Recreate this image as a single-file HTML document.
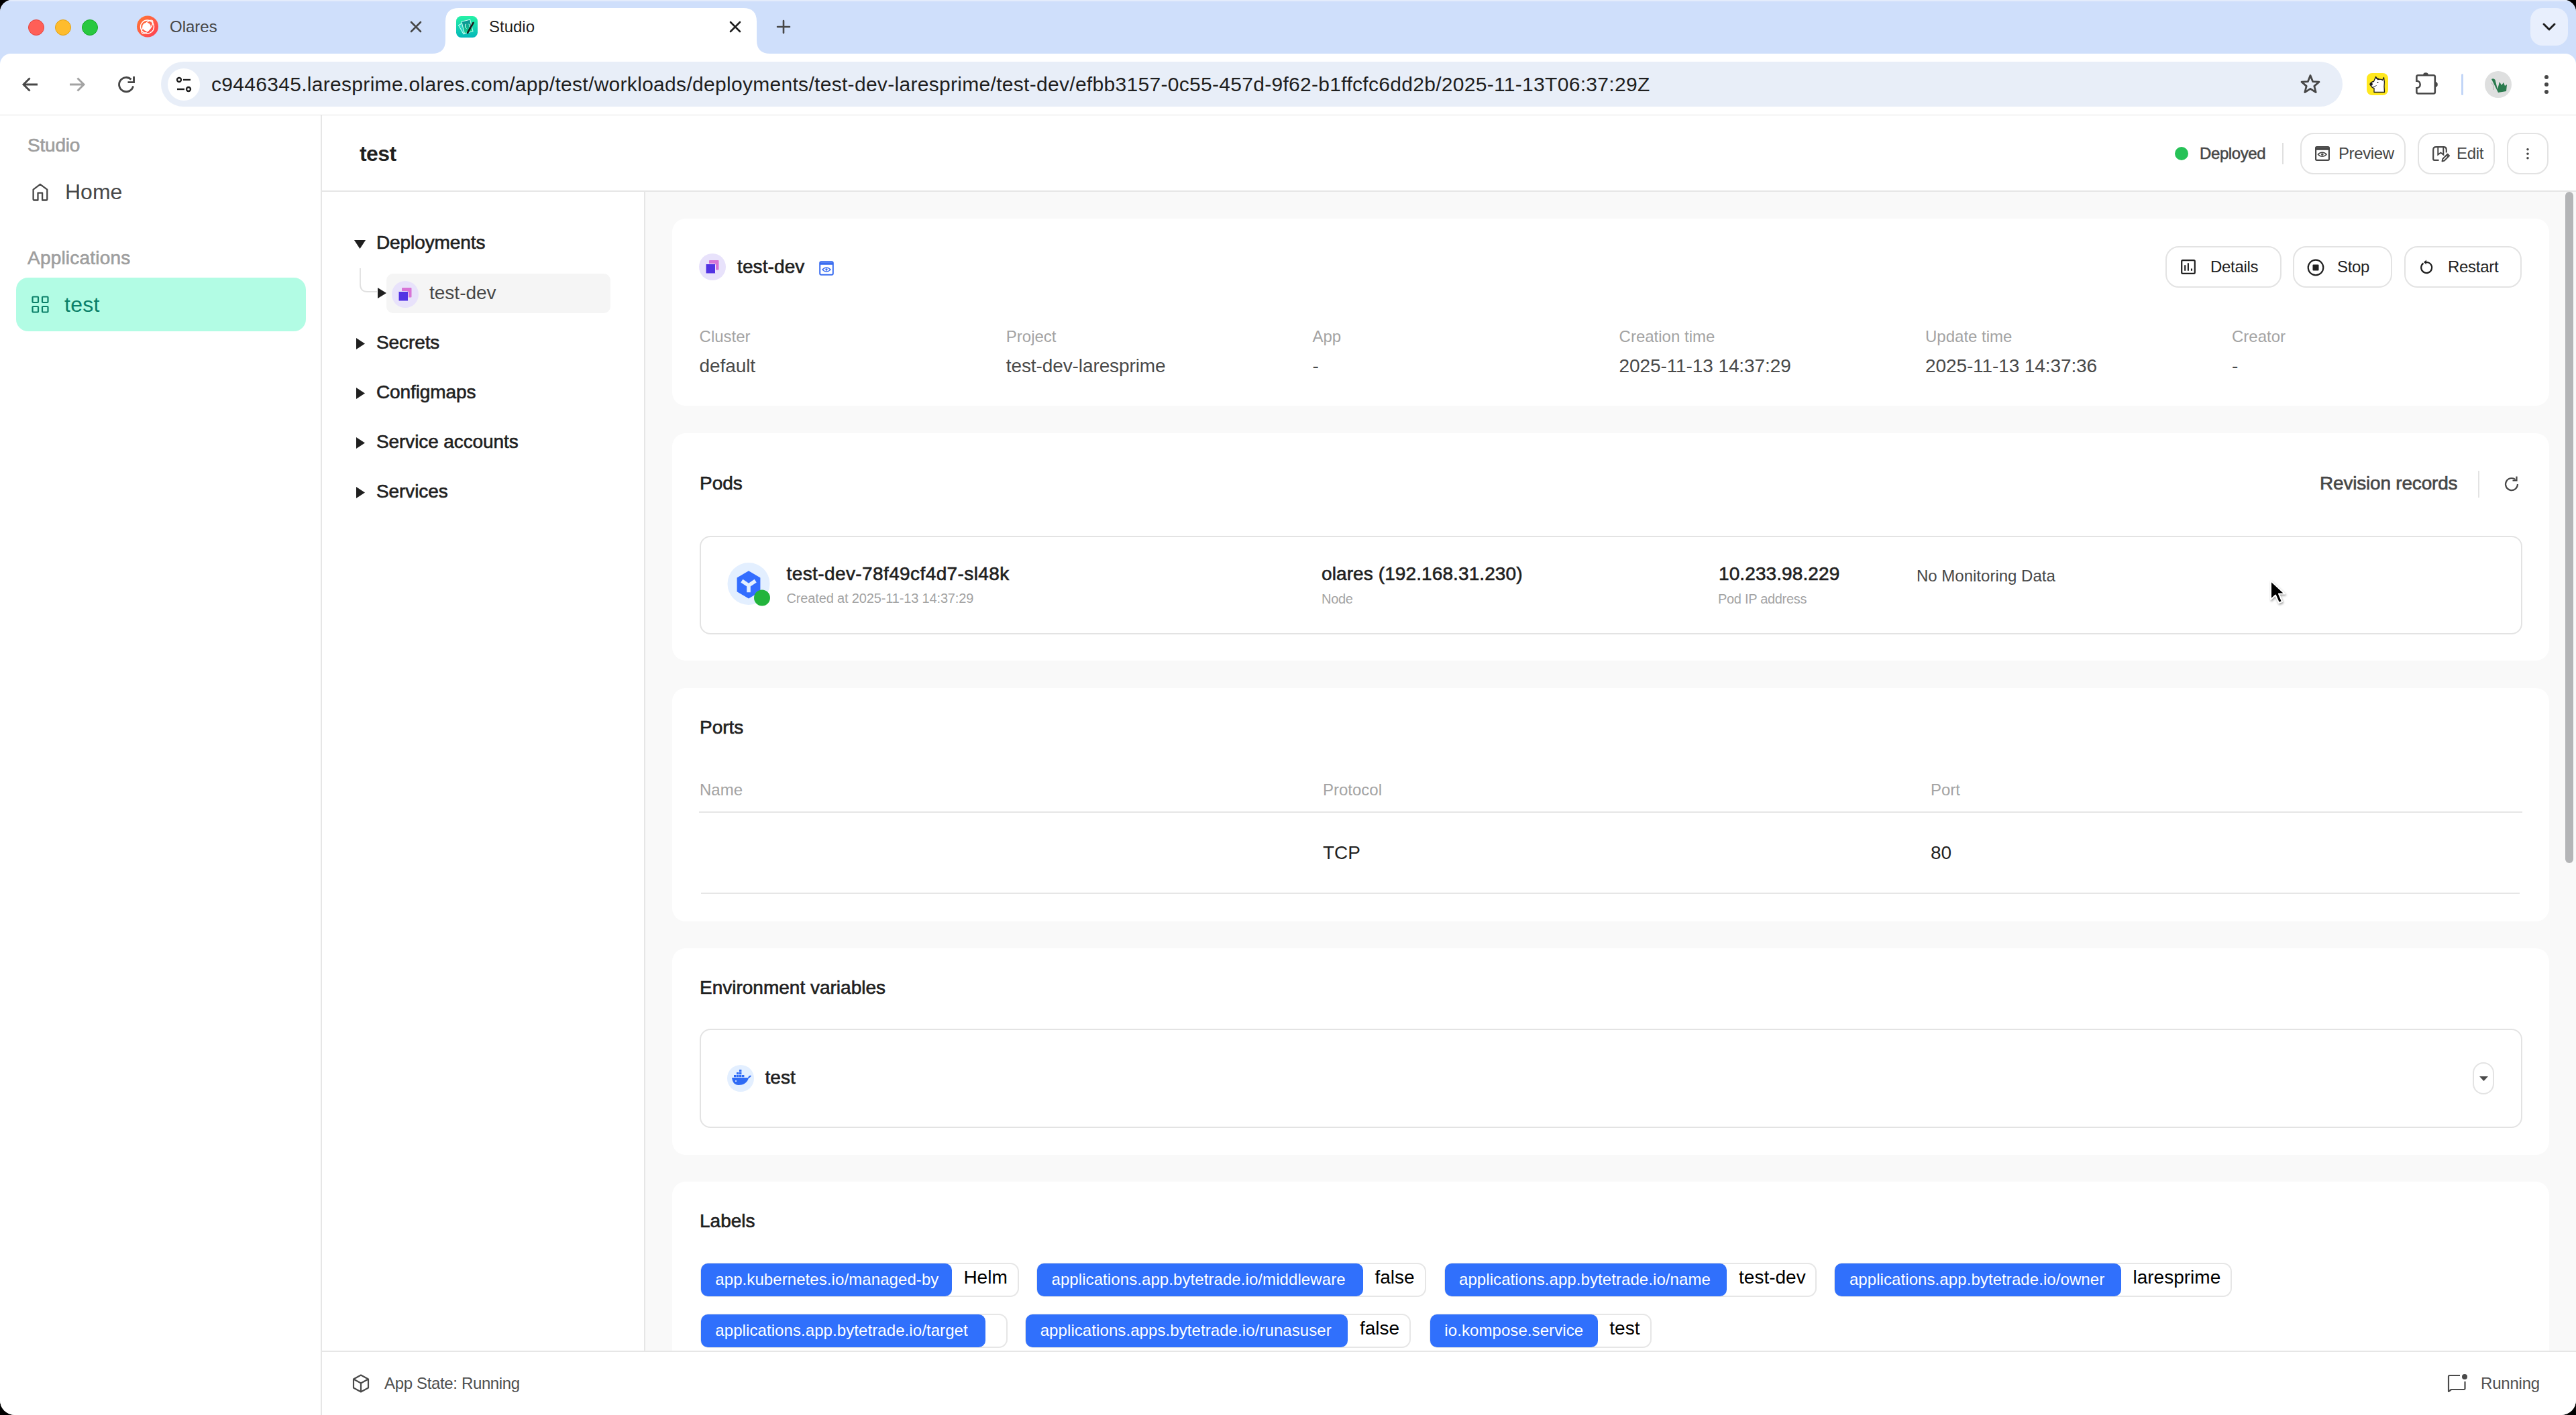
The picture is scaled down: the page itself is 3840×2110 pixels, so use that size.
<!DOCTYPE html><html><head><meta charset="utf-8"><style>
html,body{margin:0;padding:0;width:3840px;height:2110px;overflow:hidden;background:#000;}
#win{position:absolute;left:0;top:0;width:3840px;height:2110px;border-radius:18px 18px 22px 22px;overflow:hidden;background:#fff;font-family:"Liberation Sans",sans-serif;}
.a{position:absolute;box-sizing:border-box;}
.t{position:absolute;white-space:nowrap;line-height:1;}
svg.a{overflow:visible}
</style></head><body><div id="win">
<div class="a" style="left:0px;top:0px;width:3840px;height:100px;background:#cfdffb"></div>
<div class="a" style="left:0px;top:0px;width:3840px;height:2px;background:#e4ecfb"></div>
<div class="a" style="left:42px;top:29px;width:24px;height:24px;border-radius:50%;background:#ff5f57;border:1px solid #e24640"></div>
<div class="a" style="left:82px;top:29px;width:24px;height:24px;border-radius:50%;background:#febc2e;border:1px solid #e1a116"></div>
<div class="a" style="left:122px;top:29px;width:24px;height:24px;border-radius:50%;background:#28c840;border:1px solid #1aab29"></div>
<svg class="a" style="left:204px;top:24px" width="32" height="32" viewBox="0 0 32 32"><defs><linearGradient id="og" x1="0" y1="0" x2="1" y2="1"><stop offset="0" stop-color="#ff7a32"/><stop offset="1" stop-color="#ff3d55"/></linearGradient></defs><circle cx="16" cy="15.5" r="16" fill="url(#og)"/><circle cx="14.5" cy="16" r="6.2" fill="#fff"/><circle cx="15.5" cy="16" r="10" fill="none" stroke="#fff" stroke-width="1.4"/><ellipse cx="15.5" cy="16" rx="12" ry="5" fill="none" stroke="#fff" stroke-width="1.3" transform="rotate(-52 15.5 16)"/></svg>
<div class="t" style="left:253px;top:27.68px;font-size:24px;color:#474747;font-weight:400;">Olares</div>
<svg class="a" style="left:611px;top:31px" width="18" height="18" viewBox="0 0 18 18"><path d="M2 2L16 16M16 2L2 16" stroke="#474747" stroke-width="2.6" stroke-linecap="round"/></svg>
<svg class="a" style="left:644px;top:12px" width="504" height="68" viewBox="0 0 504 68"><path d="M0 68 Q20 68 20 48 L20 20 Q20 0 40 0 L464 0 Q484 0 484 20 L484 48 Q484 68 504 68 Z" fill="#fff"/></svg>
<svg class="a" style="left:680px;top:24px" width="32" height="32" viewBox="0 0 32 32"><defs><linearGradient id="sg" x1="0" y1="0" x2="0" y2="1"><stop offset="0" stop-color="#26f2a6"/><stop offset="1" stop-color="#03b7b9"/></linearGradient><linearGradient id="sc" x1="0" y1="0" x2="0" y2="1"><stop offset="0" stop-color="#0b8f96"/><stop offset="1" stop-color="#13d08e"/></linearGradient></defs><rect width="32" height="32" rx="7.5" fill="url(#sg)"/><rect x="6.5" y="10" width="11" height="15" fill="#2fd3c6" stroke="#c9fff2" stroke-width="1" transform="rotate(-30 12 17.5)"/><rect x="10" y="6.5" width="13" height="18" fill="url(#sc)" stroke="#c9fff2" stroke-width="1" transform="rotate(-14 16.5 15.5)"/><path d="M15 12Q13 12 13.5 15Q13 17 15.5 18.5M18.5 12Q21 12.5 20 16" fill="none" stroke="#e8fff8" stroke-width="1"/><path d="M25.5 10L17 25" stroke="#1a1a1a" stroke-width="2.6" stroke-linecap="round"/></svg>
<div class="t" style="left:729px;top:27.68px;font-size:24px;color:#1f1f1f;font-weight:400;">Studio</div>
<svg class="a" style="left:1087px;top:31px" width="18" height="18" viewBox="0 0 18 18"><path d="M2 2L16 16M16 2L2 16" stroke="#1f1f1f" stroke-width="2.6" stroke-linecap="round"/></svg>
<svg class="a" style="left:1158px;top:30px" width="20" height="20" viewBox="0 0 20 20"><path d="M10 1V19M1 10H19" stroke="#474747" stroke-width="2.6" stroke-linecap="round"/></svg>
<div class="a" style="left:3772px;top:12px;width:56px;height:56px;border-radius:18px;background:#e8effd"></div>
<svg class="a" style="left:3790px;top:34px" width="20" height="12" viewBox="0 0 20 12"><path d="M2 2L10 10L18 2" fill="none" stroke="#1f1f1f" stroke-width="3" stroke-linecap="round" stroke-linejoin="round"/></svg>
<div class="a" style="left:0px;top:80px;width:3840px;height:93px;background:#fff;border-bottom:2px solid #e1e3e1;border-radius:16px 16px 0 0"></div>
<svg class="a" style="left:32px;top:114px" width="25" height="24" viewBox="0 0 25 24"><path d="M24 12H3M12.5 2.5L3 12L12.5 21.5" fill="none" stroke="#474747" stroke-width="2.9"/></svg>
<svg class="a" style="left:103px;top:114px" width="25" height="24" viewBox="0 0 25 24"><path d="M1 12H22M12.5 2.5L22 12L12.5 21.5" fill="none" stroke="#a3a3a3" stroke-width="2.9"/></svg>
<svg class="a" style="left:176px;top:114px" width="25" height="24" viewBox="0 0 25 24"><path d="M22.5 14.5A10.6 10.6 0 1 1 19.5 4.5" fill="none" stroke="#474747" stroke-width="2.9"/><path d="M14.5 8.6H23.5V0" fill="none" stroke="#474747" stroke-width="2.9"/></svg>
<div class="a" style="left:240px;top:92px;width:3252px;height:67px;border-radius:34px;background:#e8eef8"></div>
<div class="a" style="left:250px;top:102px;width:48px;height:48px;border-radius:50%;background:#fff"></div>
<svg class="a" style="left:262px;top:114px" width="24" height="24" viewBox="0 0 24 24"><circle cx="5" cy="5" r="3" fill="none" stroke="#1f1f1f" stroke-width="2.4"/><path d="M11 5H22" stroke="#1f1f1f" stroke-width="2.4"/><circle cx="19" cy="19" r="3" fill="none" stroke="#1f1f1f" stroke-width="2.4"/><path d="M2 19H13" stroke="#1f1f1f" stroke-width="2.4"/></svg>
<div class="t" style="left:315px;top:110.61px;font-size:30px;color:#1f1f1f;font-weight:400;letter-spacing:0.3px;">c9446345.laresprime.olares.com/app/test/workloads/deployments/test-dev-laresprime/test-dev/efbb3157-0c55-457d-9f62-b1ffcfc6dd2b/2025-11-13T06:37:29Z</div>
<svg class="a" style="left:3428px;top:110px" width="32" height="30" viewBox="0 0 32 30"><path d="M16 2.5L19.6 11.6L29 12.2L21.8 18.4L24.2 27.6L16 22.4L7.8 27.6L10.2 18.4L3 12.2L12.4 11.6Z" fill="none" stroke="#474747" stroke-width="2.8" stroke-linejoin="round"/></svg>
<svg class="a" style="left:3528px;top:109px" width="32" height="33" viewBox="0 0 32 33"><rect width="32" height="33" rx="8" fill="#ffe81f"/><path d="M5.5 17Q6 13 10.5 12.5L13.5 5.5L16.5 9.5Q21 8.5 23.5 10.5L25.5 6.5Q27 14 26 20L26.5 28.5H11V22.5Q7 21.5 5.5 17Z" fill="#fff" stroke="#1a1a1a" stroke-width="1.3" stroke-linejoin="round"/><circle cx="6.6" cy="16.6" r="2.3" fill="#1a1a1a"/><circle cx="16.5" cy="14" r="1" fill="#1a1a1a"/><path d="M10 19.5Q12.5 20.5 14.5 18.5" fill="none" stroke="#1a1a1a" stroke-width="1"/><path d="M13.5 8Q17 7 19 10" fill="none" stroke="#1a1a1a" stroke-width="1.4"/></svg>
<svg class="a" style="left:3600px;top:106px" width="36" height="36" viewBox="0 0 36 36"><path d="M4.6 6.2H27.6Q29.8 6.2 29.8 8.4V31.3Q29.8 33.5 27.6 33.5H4.6Q2.4 33.5 2.4 31.3V25.2A5.3 5.3 0 0 0 2.4 14.6V8.4Q2.4 6.2 4.6 6.2Z" fill="none" stroke="#474747" stroke-width="2.6"/><path d="M12 6.2A4 4 0 0 1 20 6.2Z" fill="#474747"/><path d="M29.8 15.9A4 4 0 0 1 29.8 23.9Z" fill="#474747"/></svg>
<div class="a" style="left:3669px;top:110px;width:3px;height:32px;background:#c2d5f7;border-radius:2px"></div>
<svg class="a" style="left:3704px;top:106px" width="40" height="40" viewBox="0 0 40 40"><circle cx="20" cy="20" r="20" fill="#dedfdf"/><path d="M10 12Q13 10 15.5 13L19 27L22 16L25 21L28 17L30 22L33 20L32 30L20 32Z" fill="#2a7a4e"/><path d="M10 17Q11 20 13 21V28" fill="none" stroke="#b0b0b0" stroke-width="1"/></svg>
<svg class="a" style="left:3790px;top:110px" width="12" height="32" viewBox="0 0 12 32"><circle cx="6" cy="5" r="3" fill="#474747"/><circle cx="6" cy="16" r="3" fill="#474747"/><circle cx="6" cy="27" r="3" fill="#474747"/></svg>
<div class="a" style="left:0px;top:172px;width:480px;height:1938px;background:#fff;border-right:2px solid #e6e6e6"></div>
<div class="t" style="left:41px;top:203.30px;font-size:28px;color:#9e9e9e;font-weight:400;letter-spacing:-0.2px;-webkit-text-stroke:0.62px #9e9e9e;">Studio</div>
<svg class="a" style="left:48px;top:273px" width="24" height="27" viewBox="0 0 24 27"><path d="M1.6 9.6L11.9 1.8L22.3 9.6V24.3Q22.3 25.5 21.1 25.5H15.1V14.6H8.5V25.5H2.8Q1.6 25.5 1.6 24.3Z" fill="none" stroke="#474747" stroke-width="2.3" stroke-linejoin="round"/></svg>
<div class="t" style="left:97px;top:269.91px;font-size:32px;color:#474747;font-weight:400;">Home</div>
<div class="t" style="left:41px;top:371.30px;font-size:28px;color:#9e9e9e;font-weight:400;letter-spacing:0.2px;-webkit-text-stroke:0.62px #9e9e9e;">Applications</div>
<div class="a" style="left:24px;top:414px;width:432px;height:80px;border-radius:18px;background:#b2fce4"></div>
<svg class="a" style="left:47px;top:441px" width="26" height="26" viewBox="0 0 26 26"><g fill="none" stroke="#0b8069" stroke-width="2.2"><rect x="1.5" y="1.5" width="8.5" height="8.5" rx="1"/><rect x="16" y="1.5" width="8.5" height="8.5" rx="1"/><rect x="1.5" y="16" width="8.5" height="8.5" rx="1"/><rect x="16" y="16" width="8.5" height="8.5" rx="1"/></g></svg>
<div class="t" style="left:96px;top:437.91px;font-size:32px;color:#0b8069;font-weight:400;letter-spacing:0.3px;">test</div>
<div class="a" style="left:480px;top:172px;width:3360px;height:114px;background:#fff;border-bottom:2px solid #e6e6e6"></div>
<div class="t" style="left:536px;top:212.91px;font-size:32px;color:#1f1f1f;font-weight:700;letter-spacing:-0.6px;">test</div>
<div class="a" style="left:480px;top:286px;width:482px;height:1728px;background:#fff;border-right:2px solid #e6e6e6"></div>
<div class="a" style="left:962px;top:286px;width:2878px;height:1728px;background:#f9f9f9"></div>
<div class="a" style="left:3242px;top:219px;width:20px;height:20px;border-radius:50%;background:#26c257"></div>
<div class="t" style="left:3279px;top:216.68px;font-size:24px;color:#474747;font-weight:400;letter-spacing:-0.4px;-webkit-text-stroke:0.53px #474747;">Deployed</div>
<div class="a" style="left:3402px;top:213px;width:2px;height:32px;background:#e0e0e0"></div>
<div class="a" style="left:3429px;top:198px;width:157px;height:62px;border:2px solid #e3e3e3;border-radius:20px;background:#fff"></div>
<svg class="a" style="left:3451px;top:218px" width="22" height="22" viewBox="0 0 22 22"><rect x="1.1" y="1.1" width="19.8" height="19.8" rx="1.6" fill="none" stroke="#474747" stroke-width="2.2"/><path d="M1.1 4H20.9" stroke="#474747" stroke-width="3.6"/><path d="M4.5 12.3C8 8.3 13.5 8.3 17 12.3C13.5 16.3 8 16.3 4.5 12.3Z" fill="none" stroke="#474747" stroke-width="1.6"/><circle cx="10.8" cy="12.3" r="1.7" fill="#474747"/></svg>
<div class="t" style="left:3486px;top:216.68px;font-size:24px;color:#474747;font-weight:400;letter-spacing:-0.4px;">Preview</div>
<div class="a" style="left:3604px;top:198px;width:115px;height:62px;border:2px solid #e3e3e3;border-radius:20px;background:#fff"></div>
<svg class="a" style="left:3626px;top:218px" width="26" height="24" viewBox="0 0 26 24"><path d="M9.5 20.9H3A1.8 1.8 0 0 1 1.2 19.1V5.5Q1.2 1.2 5.5 1.2H16.5Q20.8 1.2 20.8 5.5V9.5" fill="none" stroke="#474747" stroke-width="2.2"/><path d="M8.3 2V12.6L12.3 9.8L16.3 12.6V2" fill="none" stroke="#474747" stroke-width="2"/><path d="M14.5 22.5L15.3 19L22.5 11.8L25 14.3L17.8 21.5Z" fill="none" stroke="#474747" stroke-width="2" stroke-linejoin="round"/><path d="M21 13.3L23.5 15.8" stroke="#474747" stroke-width="2"/></svg>
<div class="t" style="left:3662px;top:216.68px;font-size:24px;color:#474747;font-weight:400;letter-spacing:-0.3px;">Edit</div>
<div class="a" style="left:3737px;top:198px;width:62px;height:62px;border:2px solid #e3e3e3;border-radius:20px;background:#fff"></div>
<svg class="a" style="left:3764px;top:219px" width="8" height="20" viewBox="0 0 8 20"><circle cx="4" cy="3.7" r="1.8" fill="#474747"/><circle cx="4" cy="10.3" r="1.8" fill="#474747"/><circle cx="4" cy="16.7" r="1.8" fill="#474747"/></svg>
<svg class="a" style="left:527.5px;top:358.0px" width="17" height="13" viewBox="0 0 17 13"><path d="M0 0H17L8.5 13Z" fill="#1f1f1f"/></svg>
<div class="t" style="left:561px;top:348.30px;font-size:28px;color:#1f1f1f;font-weight:400;letter-spacing:-0.1px;-webkit-text-stroke:0.62px #1f1f1f;">Deployments</div>
<svg class="a" style="left:535px;top:398px" width="30" height="40" viewBox="0 0 30 40"><path d="M2 2V26Q2 37 13 37H27" fill="none" stroke="#e0e0e0" stroke-width="1.8"/></svg>
<div class="a" style="left:576px;top:408px;width:334px;height:59px;border-radius:10px;background:#f5f5f5"></div>
<svg class="a" style="left:562.5px;top:428.5px" width="13" height="16" viewBox="0 0 13 16"><path d="M0 0L13 8.0L0 16Z" fill="#1f1f1f"/></svg>
<svg class="a" style="left:584px;top:419px" width="40" height="40" viewBox="0 0 40 40"><circle cx="20" cy="20" r="20" fill="#e8e2fb"/><rect x="15" y="10" width="14.5" height="14.5" rx="1" fill="#d874d6"/><rect x="10" y="15.5" width="14.5" height="14.5" rx="1" fill="#5233e3" stroke="#f0e8fb" stroke-width="1"/></svg>
<div class="t" style="left:640px;top:423.30px;font-size:28px;color:#474747;font-weight:400;">test-dev</div>
<svg class="a" style="left:531.0px;top:503.5px" width="13" height="17" viewBox="0 0 13 17"><path d="M0 0L13 8.5L0 17Z" fill="#1f1f1f"/></svg>
<div class="t" style="left:561px;top:496.80px;font-size:28px;color:#1f1f1f;font-weight:400;letter-spacing:-0.1px;-webkit-text-stroke:0.62px #1f1f1f;">Secrets</div>
<svg class="a" style="left:531.0px;top:577.6px" width="13" height="17" viewBox="0 0 13 17"><path d="M0 0L13 8.5L0 17Z" fill="#1f1f1f"/></svg>
<div class="t" style="left:561px;top:570.90px;font-size:28px;color:#1f1f1f;font-weight:400;letter-spacing:-0.1px;-webkit-text-stroke:0.62px #1f1f1f;">Configmaps</div>
<svg class="a" style="left:531.0px;top:651.7px" width="13" height="17" viewBox="0 0 13 17"><path d="M0 0L13 8.5L0 17Z" fill="#1f1f1f"/></svg>
<div class="t" style="left:561px;top:645.00px;font-size:28px;color:#1f1f1f;font-weight:400;letter-spacing:-0.1px;-webkit-text-stroke:0.62px #1f1f1f;">Service accounts</div>
<svg class="a" style="left:531.0px;top:725.8px" width="13" height="17" viewBox="0 0 13 17"><path d="M0 0L13 8.5L0 17Z" fill="#1f1f1f"/></svg>
<div class="t" style="left:561px;top:719.10px;font-size:28px;color:#1f1f1f;font-weight:400;letter-spacing:-0.1px;-webkit-text-stroke:0.62px #1f1f1f;">Services</div>
<div class="a" style="left:3824px;top:286px;width:12px;height:1001px;border-radius:6px;background:#b4b5b7"></div>
<div class="a" style="left:1002px;top:326px;width:2798px;height:279px;border-radius:20px;background:#fff"></div>
<svg class="a" style="left:1042px;top:378px" width="40" height="40" viewBox="0 0 40 40"><circle cx="20" cy="20" r="20" fill="#e8e2fb"/><rect x="15" y="10" width="14.5" height="14.5" rx="1" fill="#d874d6"/><rect x="10" y="15.5" width="14.5" height="14.5" rx="1" fill="#5233e3" stroke="#f0e8fb" stroke-width="1"/></svg>
<div class="t" style="left:1099px;top:384.30px;font-size:28px;color:#1f1f1f;font-weight:400;letter-spacing:0.1px;-webkit-text-stroke:0.62px #1f1f1f;">test-dev</div>
<svg class="a" style="left:1221px;top:389px" width="22" height="22" viewBox="0 0 22 22"><rect x="1.2" y="1.2" width="19.6" height="19.6" rx="2" fill="none" stroke="#3a6df0" stroke-width="2"/><path d="M1.2 4H20.8" stroke="#3a6df0" stroke-width="3.6"/><path d="M5 13C8.5 9 13.5 9 17 13C13.5 17 8.5 17 5 13Z" fill="none" stroke="#3a6df0" stroke-width="1.6"/><circle cx="11" cy="13" r="1.7" fill="#3a6df0"/></svg>
<div class="a" style="left:3228px;top:367px;width:173px;height:62px;border:2px solid #e3e3e3;border-radius:20px;background:#fff"></div>
<svg class="a" style="left:3251px;top:387px" width="22" height="22" viewBox="0 0 22 22"><rect x="1.2" y="1.2" width="19.6" height="19.6" rx="1.5" fill="none" stroke="#1f1f1f" stroke-width="2.2"/><path d="M6.2 8.2V16.8M10.9 5.2V16.8M16 13.6V16.8" stroke="#1f1f1f" stroke-width="2.1"/></svg>
<div class="t" style="left:3295px;top:385.68px;font-size:24px;color:#1f1f1f;font-weight:400;letter-spacing:-0.3px;">Details</div>
<div class="a" style="left:3418px;top:367px;width:148px;height:62px;border:2px solid #e3e3e3;border-radius:20px;background:#fff"></div>
<svg class="a" style="left:3439px;top:386px" width="26" height="26" viewBox="0 0 26 26"><circle cx="13" cy="13" r="11.3" fill="none" stroke="#1f1f1f" stroke-width="2.2"/><rect x="8.5" y="8.5" width="9" height="9" rx="1" fill="#1f1f1f"/></svg>
<div class="t" style="left:3484px;top:385.68px;font-size:24px;color:#1f1f1f;font-weight:400;letter-spacing:-0.3px;">Stop</div>
<div class="a" style="left:3584px;top:367px;width:175px;height:62px;border:2px solid #e3e3e3;border-radius:20px;background:#fff"></div>
<svg class="a" style="left:3606px;top:387px" width="20" height="22" viewBox="0 0 20 22"><path d="M6.5 5.5A8 8 0 1 0 11 4" fill="none" stroke="#1f1f1f" stroke-width="2.2"/><path d="M11 0.5V7.5L7 4Z" fill="#1f1f1f"/></svg>
<div class="t" style="left:3649px;top:385.68px;font-size:24px;color:#1f1f1f;font-weight:400;letter-spacing:-0.3px;">Restart</div>
<div class="t" style="left:1042.6px;top:489.68px;font-size:24px;color:#a3a3a3;font-weight:400;">Cluster</div>
<div class="t" style="left:1042.6px;top:532.30px;font-size:28px;color:#4a4a4a;font-weight:400;letter-spacing:-0.1px;">default</div>
<div class="t" style="left:1499.8px;top:489.68px;font-size:24px;color:#a3a3a3;font-weight:400;">Project</div>
<div class="t" style="left:1499.8px;top:532.30px;font-size:28px;color:#4a4a4a;font-weight:400;letter-spacing:-0.1px;">test-dev-laresprime</div>
<div class="t" style="left:1956.5px;top:489.68px;font-size:24px;color:#a3a3a3;font-weight:400;">App</div>
<div class="t" style="left:1956.5px;top:532.30px;font-size:28px;color:#4a4a4a;font-weight:400;letter-spacing:-0.1px;">-</div>
<div class="t" style="left:2413.6px;top:489.68px;font-size:24px;color:#a3a3a3;font-weight:400;">Creation time</div>
<div class="t" style="left:2413.6px;top:532.30px;font-size:28px;color:#4a4a4a;font-weight:400;letter-spacing:-0.1px;">2025-11-13 14:37:29</div>
<div class="t" style="left:2870px;top:489.68px;font-size:24px;color:#a3a3a3;font-weight:400;">Update time</div>
<div class="t" style="left:2870px;top:532.30px;font-size:28px;color:#4a4a4a;font-weight:400;letter-spacing:-0.1px;">2025-11-13 14:37:36</div>
<div class="t" style="left:3327px;top:489.68px;font-size:24px;color:#a3a3a3;font-weight:400;">Creator</div>
<div class="t" style="left:3327px;top:532.30px;font-size:28px;color:#4a4a4a;font-weight:400;letter-spacing:-0.1px;">-</div>
<div class="a" style="left:1002px;top:646px;width:2798px;height:339px;border-radius:20px;background:#fff"></div>
<div class="t" style="left:1043px;top:707.30px;font-size:28px;color:#1f1f1f;font-weight:400;-webkit-text-stroke:0.62px #1f1f1f;">Pods</div>
<div class="t" style="left:3458px;top:707.30px;font-size:28px;color:#474747;font-weight:400;letter-spacing:-0.2px;-webkit-text-stroke:0.62px #474747;">Revision records</div>
<div class="a" style="left:3694px;top:702px;width:2px;height:40px;background:#e3e3e3"></div>
<svg class="a" style="left:3732px;top:710px" width="24" height="24" viewBox="0 0 24 24"><path d="M21 12A9 9 0 1 1 17.6 5" fill="none" stroke="#474747" stroke-width="2.2"/><path d="M13.5 4.5H19.5V-1.5" fill="none" stroke="#474747" stroke-width="2.2" transform="translate(0 2)"/></svg>
<div class="a" style="left:1043px;top:799px;width:2717px;height:147px;border:2px solid #e3e3e3;border-radius:16px"></div>
<svg class="a" style="left:1084px;top:839px" width="72" height="66" viewBox="0 0 72 66"><circle cx="32" cy="31.5" r="31.5" fill="#e3efff"/><path d="M32 12.2L49.4 22.4V43.3L32 53.5L14.6 43.3V22.4Z" fill="#336dff"/><path d="M32 34V44.3M32 34L21.8 27.2M32 34L42.2 27.2" stroke="#e3efff" stroke-width="5.6" stroke-linecap="butt"/><circle cx="52" cy="52.6" r="12" fill="#22b43c"/></svg>
<div class="t" style="left:1172.5px;top:842.30px;font-size:28px;color:#1f1f1f;font-weight:400;letter-spacing:0.4px;-webkit-text-stroke:0.62px #1f1f1f;">test-dev-78f49cf4d7-sl48k</div>
<div class="t" style="left:1172.5px;top:882.07px;font-size:20px;color:#a3a3a3;font-weight:400;letter-spacing:-0.15px;">Created at 2025-11-13 14:37:29</div>
<div class="t" style="left:1970px;top:842.30px;font-size:28px;color:#1f1f1f;font-weight:400;letter-spacing:0.1px;-webkit-text-stroke:0.62px #1f1f1f;">olares (192.168.31.230)</div>
<div class="t" style="left:1970px;top:883.07px;font-size:20px;color:#a3a3a3;font-weight:400;letter-spacing:-0.3px;">Node</div>
<div class="t" style="left:2562px;top:842.30px;font-size:28px;color:#1f1f1f;font-weight:400;letter-spacing:0.1px;-webkit-text-stroke:0.62px #1f1f1f;">10.233.98.229</div>
<div class="t" style="left:2561px;top:883.07px;font-size:20px;color:#a3a3a3;font-weight:400;letter-spacing:-0.3px;">Pod IP address</div>
<div class="t" style="left:2857px;top:846.68px;font-size:24px;color:#474747;font-weight:400;">No Monitoring Data</div>
<svg class="a" style="left:3383px;top:864px;filter:drop-shadow(1px 2px 1.5px rgba(0,0,0,0.35))" width="26" height="40" viewBox="0 0 26 40"><path d="M2 2V30L9 23.5L14 35L19 33L14 21.5H23Z" fill="#000" stroke="#fff" stroke-width="2" stroke-linejoin="round"/></svg>
<div class="a" style="left:1002px;top:1026px;width:2798px;height:348px;border-radius:20px;background:#fff"></div>
<div class="t" style="left:1043px;top:1071.30px;font-size:28px;color:#1f1f1f;font-weight:400;-webkit-text-stroke:0.62px #1f1f1f;">Ports</div>
<div class="t" style="left:1043px;top:1165.68px;font-size:24px;color:#a3a3a3;font-weight:400;">Name</div>
<div class="t" style="left:1972px;top:1165.68px;font-size:24px;color:#a3a3a3;font-weight:400;">Protocol</div>
<div class="t" style="left:2878px;top:1165.68px;font-size:24px;color:#a3a3a3;font-weight:400;">Port</div>
<div class="a" style="left:1042px;top:1210px;width:2718px;height:2px;background:#e6e6e6"></div>
<div class="t" style="left:1972px;top:1258.30px;font-size:28px;color:#1f1f1f;font-weight:400;">TCP</div>
<div class="t" style="left:2878px;top:1258.30px;font-size:28px;color:#1f1f1f;font-weight:400;">80</div>
<div class="a" style="left:1045px;top:1331px;width:2711px;height:2px;background:#e6e6e6"></div>
<div class="a" style="left:1002px;top:1414px;width:2798px;height:308px;border-radius:20px;background:#fff"></div>
<div class="t" style="left:1043px;top:1458.80px;font-size:28px;color:#1f1f1f;font-weight:400;-webkit-text-stroke:0.62px #1f1f1f;">Environment variables</div>
<div class="a" style="left:1043px;top:1534px;width:2717px;height:148px;border:2px solid #e3e3e3;border-radius:16px"></div>
<svg class="a" style="left:1084px;top:1588px" width="40" height="40" viewBox="0 0 40 40"><circle cx="20" cy="20" r="20" fill="#e3efff"/><path d="M7 19H31C32 16 34 15 36 16C35 18 34 19 32 19.5C30 27 24 30 17 30C11 30 8 26 7 19Z" fill="#2f6bf5"/><g fill="#2f6bf5"><rect x="10" y="15" width="3.4" height="3.2"/><rect x="14" y="15" width="3.4" height="3.2"/><rect x="18" y="15" width="3.4" height="3.2"/><rect x="22" y="15" width="3.4" height="3.2"/><rect x="14" y="11" width="3.4" height="3.2"/><rect x="18" y="11" width="3.4" height="3.2"/><rect x="18" y="7" width="3.4" height="3.2"/></g><circle cx="13" cy="24" r="1" fill="#fff"/></svg>
<div class="t" style="left:1140.6px;top:1592.90px;font-size:28px;color:#1f1f1f;font-weight:400;-webkit-text-stroke:0.62px #1f1f1f;">test</div>
<div class="a" style="left:3686px;top:1584px;width:32px;height:48px;border:2px solid #e3e3e3;border-radius:16px"></div>
<svg class="a" style="left:3695.5px;top:1604.5px" width="13" height="7" viewBox="0 0 13 7"><path d="M0 0H13L6.5 7Z" fill="#4a4a4a"/></svg>
<div class="a" style="left:1002px;top:1762px;width:2798px;height:278px;border-radius:20px;background:#fff"></div>
<div class="t" style="left:1043px;top:1807.30px;font-size:28px;color:#1f1f1f;font-weight:400;-webkit-text-stroke:0.62px #1f1f1f;">Labels</div>
<div class="a" style="left:1043.8px;top:1882.5px;width:475.20000000000005px;height:51.0px;border:2px solid #e6e6e6;border-radius:13px;background:#fff"></div>
<div class="a" style="left:1044.8px;top:1883.5px;width:373.9000000000001px;height:49.0px;border-radius:10px;background:#3070fc"></div>
<div class="t" style="left:1066.3px;top:1896.18px;font-size:24px;color:#fff;font-weight:400;letter-spacing:0.08px;">app.kubernetes.io/managed-by</div>
<div class="t" style="left:1436.4px;top:1890.80px;font-size:28px;color:#000;font-weight:400;">Helm</div>
<div class="a" style="left:1545px;top:1882.5px;width:580.8000000000002px;height:51.0px;border:2px solid #e6e6e6;border-radius:13px;background:#fff"></div>
<div class="a" style="left:1546px;top:1883.5px;width:485.70000000000005px;height:49.0px;border-radius:10px;background:#3070fc"></div>
<div class="t" style="left:1567.5px;top:1896.18px;font-size:24px;color:#fff;font-weight:400;letter-spacing:0.08px;">applications.app.bytetrade.io/middleware</div>
<div class="t" style="left:2049.4px;top:1890.80px;font-size:28px;color:#000;font-weight:400;">false</div>
<div class="a" style="left:2152.5px;top:1882.5px;width:555.5999999999999px;height:51.0px;border:2px solid #e6e6e6;border-radius:13px;background:#fff"></div>
<div class="a" style="left:2153.5px;top:1883.5px;width:420.9000000000001px;height:49.0px;border-radius:10px;background:#3070fc"></div>
<div class="t" style="left:2175.0px;top:1896.18px;font-size:24px;color:#fff;font-weight:400;letter-spacing:0.08px;">applications.app.bytetrade.io/name</div>
<div class="t" style="left:2592.1px;top:1890.80px;font-size:28px;color:#000;font-weight:400;">test-dev</div>
<div class="a" style="left:2734.4px;top:1882.5px;width:592.9000000000001px;height:51.0px;border:2px solid #e6e6e6;border-radius:13px;background:#fff"></div>
<div class="a" style="left:2735.4px;top:1883.5px;width:426.4000000000001px;height:49.0px;border-radius:10px;background:#3070fc"></div>
<div class="t" style="left:2756.9px;top:1896.18px;font-size:24px;color:#fff;font-weight:400;letter-spacing:0.08px;">applications.app.bytetrade.io/owner</div>
<div class="t" style="left:3179.5px;top:1890.80px;font-size:28px;color:#000;font-weight:400;">laresprime</div>
<div class="a" style="left:1043.8px;top:1958.5px;width:457.79999999999995px;height:51.0px;border:2px solid #e6e6e6;border-radius:13px;background:#fff"></div>
<div class="a" style="left:1044.8px;top:1959.5px;width:423.79999999999995px;height:49.0px;border-radius:10px;background:#3070fc"></div>
<div class="t" style="left:1066.3px;top:1972.18px;font-size:24px;color:#fff;font-weight:400;letter-spacing:0.08px;">applications.app.bytetrade.io/target</div>
<div class="t" style="left:1486.3px;top:1966.80px;font-size:28px;color:#000;font-weight:400;"></div>
<div class="a" style="left:1528.2px;top:1958.5px;width:575.2px;height:51.0px;border:2px solid #e6e6e6;border-radius:13px;background:#fff"></div>
<div class="a" style="left:1529.2px;top:1959.5px;width:480.0999999999999px;height:49.0px;border-radius:10px;background:#3070fc"></div>
<div class="t" style="left:1550.7px;top:1972.18px;font-size:24px;color:#fff;font-weight:400;letter-spacing:0.08px;">applications.apps.bytetrade.io/runasuser</div>
<div class="t" style="left:2027.0px;top:1966.80px;font-size:28px;color:#000;font-weight:400;">false</div>
<div class="a" style="left:2130.8px;top:1958.5px;width:331.0999999999999px;height:51.0px;border:2px solid #e6e6e6;border-radius:13px;background:#fff"></div>
<div class="a" style="left:2131.8px;top:1959.5px;width:249.79999999999973px;height:49.0px;border-radius:10px;background:#3070fc"></div>
<div class="t" style="left:2153.3px;top:1972.18px;font-size:24px;color:#fff;font-weight:400;letter-spacing:0.08px;">io.kompose.service</div>
<div class="t" style="left:2399.2999999999997px;top:1966.80px;font-size:28px;color:#000;font-weight:400;">test</div>
<div class="a" style="left:480px;top:2014px;width:3360px;height:96px;background:#fff;border-top:2px solid #e6e6e6"></div>
<svg class="a" style="left:525px;top:2049px" width="26" height="28" viewBox="0 0 26 28"><path d="M13 1.5L24 7.5V20.5L13 26.5L2 20.5V7.5Z M2 7.5L13 13.5L24 7.5 M13 13.5V26.5" fill="none" stroke="#4a4a4a" stroke-width="2.2" stroke-linejoin="round"/></svg>
<div class="t" style="left:573px;top:2050.98px;font-size:24px;color:#505050;font-weight:400;letter-spacing:-0.35px;">App State: Running</div>
<svg class="a" style="left:3648px;top:2048px" width="32" height="32" viewBox="0 0 32 32"><path d="M19 3H3.5A1.5 1.5 0 0 0 2 4.5V27L6 24H25A1.5 1.5 0 0 0 26.5 22.5V12" fill="none" stroke="#4a4a4a" stroke-width="2.2" stroke-linejoin="round"/><circle cx="26" cy="5" r="4" fill="#4a4a4a"/></svg>
<div class="t" style="left:3698px;top:2050.68px;font-size:24px;color:#505050;font-weight:400;letter-spacing:-0.2px;">Running</div>
</div></body></html>
